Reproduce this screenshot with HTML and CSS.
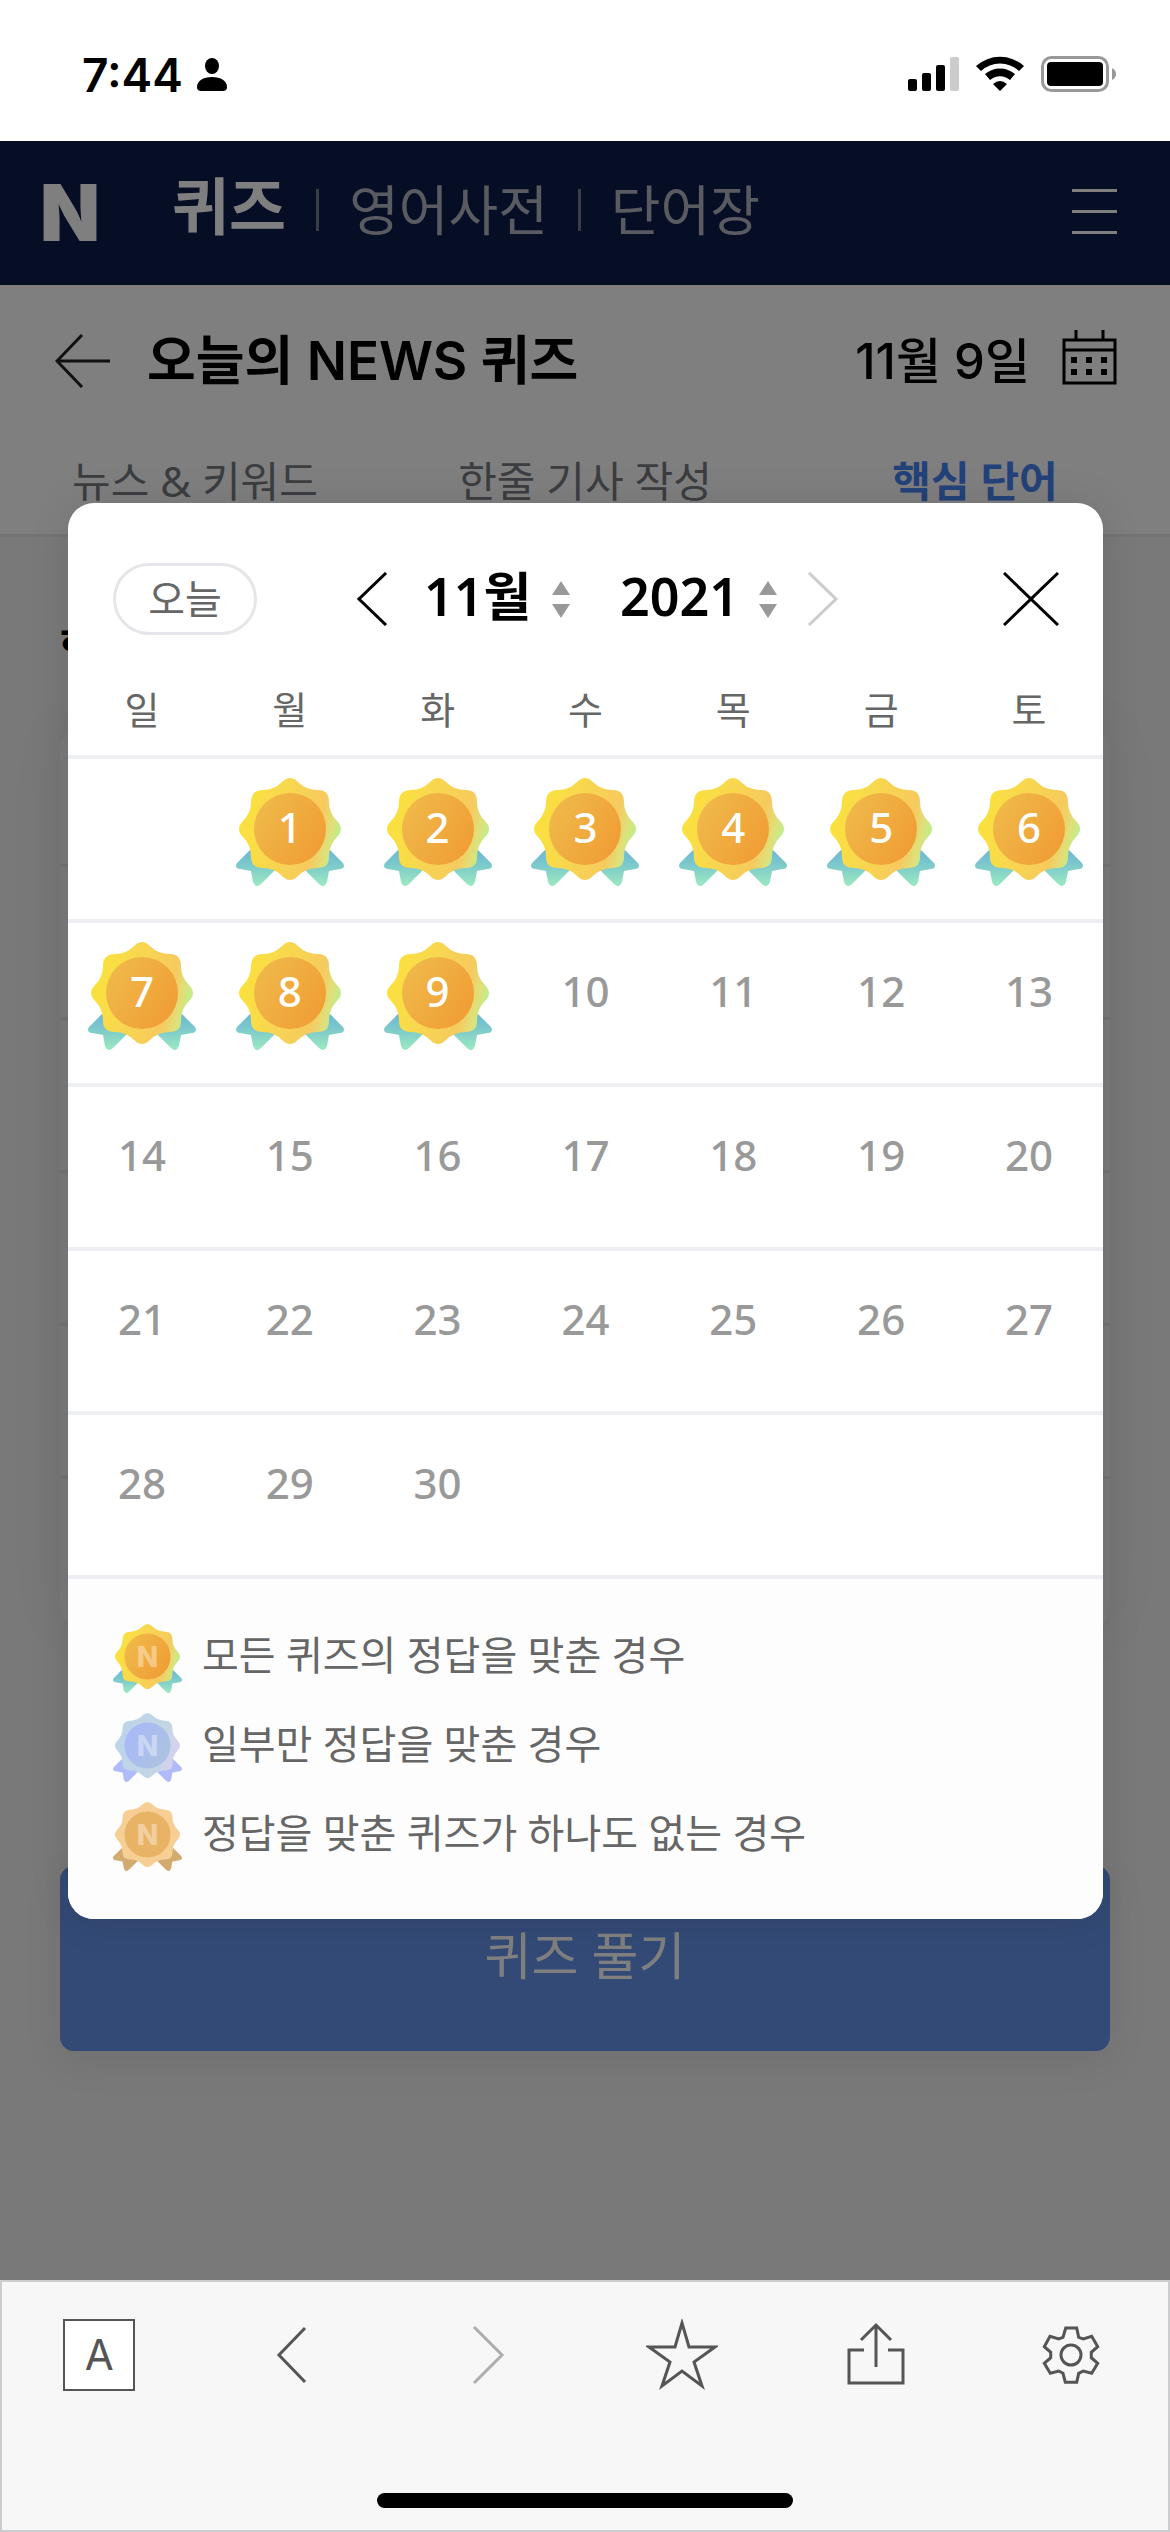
FILE: index.html
```html
<!DOCTYPE html>
<html lang="ko">

<head>
    <meta charset="UTF-8">
    <meta name="viewport" content="width=device-width, initial-scale=1.0">
    <title>오늘의 NEWS 퀴즈</title>
    <link rel="stylesheet" href="styles.css">
</head>

<body>
    <!-- shared shapes and gradients -->
    <svg class="defs" width="0" height="0" aria-hidden="true">
        <defs>
            <linearGradient id="goldEdge" x1="0" y1="0.3" x2="1" y2="0.55">
                <stop offset="0" stop-color="#fbe23a" />
                <stop offset="0.25" stop-color="#f9dc48" />
                <stop offset="0.78" stop-color="#f6ca5e" />
                <stop offset="0.9" stop-color="#dfe07a" />
                <stop offset="1" stop-color="#b9f08c" />
            </linearGradient>
            <linearGradient id="goldCoin" x1="0" y1="0.2" x2="1" y2="0.8">
                <stop offset="0" stop-color="#f0ba4a" />
                <stop offset="1" stop-color="#f09c34" />
            </linearGradient>
            <linearGradient id="goldTail" x1="0" y1="0" x2="0" y2="1">
                <stop offset="0" stop-color="#6cb8d4" />
                <stop offset="0.4" stop-color="#7cc8cc" />
                <stop offset="1" stop-color="#9ceac0" />
            </linearGradient>
            <linearGradient id="blueEdge" x1="0" y1="0.3" x2="1" y2="0.6">
                <stop offset="0" stop-color="#bcd4ea" />
                <stop offset="0.7" stop-color="#c2d6e4" />
                <stop offset="1" stop-color="#dcd0f4" />
            </linearGradient>
            <linearGradient id="blueCoin" x1="0" y1="0.2" x2="1" y2="0.8">
                <stop offset="0" stop-color="#a9b8fb" />
                <stop offset="1" stop-color="#abc4de" />
            </linearGradient>
            <path id="badgeEdge" d="M46 4Q54-4 62 4Q70 12 82 12Q93 12 93 24Q93 35 101 43Q109 51 101 59Q93 67 93 79Q93 90 82 90Q70 90 62 98Q54 106 46 98Q38 90 27 90Q15 90 15 79Q15 67 7 59Q-1 51 7 43Q15 35 15 24Q15 12 27 12Q38 12 46 4Z" />
            <path id="badgeTail" d="M14 72L1 85Q-2 90 4 91L15 93L17 104Q20 111 25 106L40 91ZM94 72L107 85Q110 90 104 91L93 93L91 104Q88 111 83 106L68 91Z" />
            <symbol id="gold" viewBox="0 0 108 108">
                <use href="#badgeTail" fill="url(#goldTail)" />
                <use href="#badgeEdge" fill="url(#goldEdge)" />
                <circle cx="54" cy="51" r="36" fill="url(#goldCoin)" />
            </symbol>
            <symbol id="blue" viewBox="0 0 108 108">
                <use href="#badgeTail" fill="#b0bbfa" />
                <use href="#badgeEdge" fill="url(#blueEdge)" />
                <circle cx="54" cy="51" r="36" fill="url(#blueCoin)" />
            </symbol>
            <symbol id="bronze" viewBox="0 0 108 108">
                <use href="#badgeTail" fill="#d2ab70" />
                <use href="#badgeEdge" fill="#f7cf94" />
                <circle cx="54" cy="51" r="36" fill="#e9b365" />
            </symbol>
            <symbol id="spin" viewBox="0 0 18 38">
                <path d="M9 1L18 15H0ZM9 38L18 24H0Z" fill="#999" />
            </symbol>
        </defs>
    </svg>

    <div class="status">
        <span class="clock">7:44</span>
        <svg class="person" width="30" height="34" viewBox="0 0 30 34">
            <ellipse cx="15" cy="8" rx="7" ry="8" />
            <path d="M0 29C0 23 6 19 15 19S30 23 30 29Q30 33 26 33H4Q0 33 0 29Z" />
        </svg>
        <svg class="signals" width="210" height="38" viewBox="0 0 210 38">
            <rect x="0" y="23" width="9" height="12" rx="2" />
            <rect x="14" y="17" width="9" height="18" rx="2" />
            <rect x="28" y="9" width="9" height="26" rx="2" />
            <rect x="42" y="1" width="9" height="34" rx="2" fill="#ccc" />
            <path d="M68 10A36 36 0 0 1 116 10L111 15A28 28 0 0 0 73 15ZM77 18A23 23 0 0 1 107 18L102 24A15 15 0 0 0 82 24ZM85 28Q92 22 99 28L92 35Z" />
            <rect x="134.500" y="1.500" width="65" height="33" rx="9" fill="none" stroke="#999" stroke-width="3" />
            <rect x="139" y="6" width="56" height="24" rx="4" />
            <path d="M204 12Q208 14 208 18T204 24Z" fill="#999" />
        </svg>
    </div>

    <div class="page">
        <nav class="nav">
            <a href="#" class="logo">N</a>
            <a href="#" class="menu on">퀴즈</a>
            <a href="#" class="menu">영어사전</a>
            <a href="#" class="menu">단어장</a>
            <button class="burger" aria-label="메뉴">
                <span></span>
                <span></span>
                <span></span>
            </button>
        </nav>

        <header class="top">
            <button aria-label="뒤로">
                <svg width="56" height="54" viewBox="0 0 56 54" fill="none" stroke="#222" stroke-width="3">
                    <path d="M27 1L2 27L27 53M2 27H55" />
                </svg>
            </button>
            <h1>오늘의 NEWS 퀴즈</h1>
            <span class="date">11월 9일</span>
            <button class="pick-date" aria-label="달력">
                <svg width="55" height="55" viewBox="0 0 55 55">
                    <path d="M2 10H53V53H2ZM2 20H53M14 0V10M41 0V10" fill="none" stroke="#000" stroke-width="3" />
                    <path d="M9 27h6v6h-6zM24 27h6v6h-6zM39 27h6v6h-6zM9 39h6v6h-6zM24 39h6v6h-6zM39 39h6v6h-6z" />
                </svg>
            </button>
        </header>

        <div class="tabs">
            <a href="#">뉴스 &amp; 키워드</a>
            <a href="#">한줄 기사 작성</a>
            <a href="#" class="on">핵심 단어</a>
        </div>

        <main class="content">
            <h2>핵심</h2>
            <ul class="words">
                <li></li>
                <li></li>
                <li></li>
                <li></li>
                <li></li>
                <li></li>
            </ul>
            <button class="solve">퀴즈 풀기</button>
        </main>

        <div class="dim">
            <div class="modal">
                <div class="cal-head">
                    <button class="today">오늘</button>
                    <button class="prev" aria-label="이전 달">
                        <svg width="32" height="54" viewBox="0 0 32 54" fill="none" stroke="#000" stroke-width="3">
                            <path d="M30 1L3 27L30 53" />
                        </svg>
                    </button>
                    <label class="pick">
                        <select aria-label="월">
                            <option>10월</option>
                            <option selected>11월</option>
                        </select>
                        <svg width="18" height="38"><use href="#spin" /></svg>
                    </label>
                    <label class="pick year">
                        <select aria-label="연도">
                            <option>2020</option>
                            <option selected>2021</option>
                        </select>
                        <svg width="18" height="38"><use href="#spin" /></svg>
                    </label>
                    <button class="next" aria-label="다음 달" disabled>
                        <svg width="32" height="54" viewBox="0 0 32 54" fill="none" stroke="#ccc" stroke-width="3">
                            <path d="M2 1L29 27L2 53" />
                        </svg>
                    </button>
                    <button class="close" aria-label="닫기">
                        <svg width="56" height="54" viewBox="0 0 56 54" fill="none" stroke="#000" stroke-width="3">
                            <path d="M1 1L55 53M55 1L1 53" />
                        </svg>
                    </button>
                </div>

                <table class="cal">
                    <thead>
                        <tr>
                            <th>일</th>
                            <th>월</th>
                            <th>화</th>
                            <th>수</th>
                            <th>목</th>
                            <th>금</th>
                            <th>토</th>
                        </tr>
                    </thead>
                    <tbody>
                        <tr>
                            <td></td>
                            <td><div class="day done"><svg><use href="#gold" /></svg><span>1</span></div></td>
                            <td><div class="day done"><svg><use href="#gold" /></svg><span>2</span></div></td>
                            <td><div class="day done"><svg><use href="#gold" /></svg><span>3</span></div></td>
                            <td><div class="day done"><svg><use href="#gold" /></svg><span>4</span></div></td>
                            <td><div class="day done"><svg><use href="#gold" /></svg><span>5</span></div></td>
                            <td><div class="day done"><svg><use href="#gold" /></svg><span>6</span></div></td>
                        </tr>
                        <tr>
                            <td><div class="day done"><svg><use href="#gold" /></svg><span>7</span></div></td>
                            <td><div class="day done"><svg><use href="#gold" /></svg><span>8</span></div></td>
                            <td><div class="day done"><svg><use href="#gold" /></svg><span>9</span></div></td>
                            <td><div class="day">10</div></td>
                            <td><div class="day">11</div></td>
                            <td><div class="day">12</div></td>
                            <td><div class="day">13</div></td>
                        </tr>
                        <tr>
                            <td><div class="day">14</div></td>
                            <td><div class="day">15</div></td>
                            <td><div class="day">16</div></td>
                            <td><div class="day">17</div></td>
                            <td><div class="day">18</div></td>
                            <td><div class="day">19</div></td>
                            <td><div class="day">20</div></td>
                        </tr>
                        <tr>
                            <td><div class="day">21</div></td>
                            <td><div class="day">22</div></td>
                            <td><div class="day">23</div></td>
                            <td><div class="day">24</div></td>
                            <td><div class="day">25</div></td>
                            <td><div class="day">26</div></td>
                            <td><div class="day">27</div></td>
                        </tr>
                        <tr>
                            <td><div class="day">28</div></td>
                            <td><div class="day">29</div></td>
                            <td><div class="day">30</div></td>
                            <td></td>
                            <td></td>
                            <td></td>
                            <td></td>
                        </tr>
                    </tbody>
                </table>

                <ul class="legend">
                    <li>
                        <svg viewBox="0 0 108 108"><use href="#gold" /><text x="54" y="67">N</text></svg>
                        모든 퀴즈의 정답을 맞춘 경우
                    </li>
                    <li>
                        <svg viewBox="0 0 108 108"><use href="#blue" /><text x="54" y="67">N</text></svg>
                        일부만 정답을 맞춘 경우
                    </li>
                    <li>
                        <svg viewBox="0 0 108 108"><use href="#bronze" /><text x="54" y="67">N</text></svg>
                        정답을 맞춘 퀴즈가 하나도 없는 경우
                    </li>
                </ul>
            </div>
        </div>
    </div>

    <footer class="toolbar">
        <div class="tools">
            <button class="letter"><span>A</span></button>
            <button aria-label="이전">
                <svg viewBox="0 0 72 72"><path d="M48 9L22 36L48 63" /></svg>
            </button>
            <button aria-label="다음" class="off">
                <svg viewBox="0 0 72 72"><path d="M22 8L50 36L22 64" /></svg>
            </button>
            <button aria-label="즐겨찾기">
                <svg viewBox="0 0 72 72"><path d="M36 4L43 28H69L48 43L56 67L36 52L16 67L24 43L3 28H29Z" /></svg>
            </button>
            <button aria-label="공유">
                <svg viewBox="0 0 72 72"><path d="M24 31H9V64H63V31H48M36 48V6M21 21L36 6L51 21" /></svg>
            </button>
            <button aria-label="설정">
                <svg viewBox="-8 -8 72 72">
                    <path d="M22.700 1H33.700L35.700 10.300L40.300 12L48.700 9.300L54.700 19.700L48.300 25.300V30.700L54.700 36.300L48.700 46.300L40.300 44L35.700 46.300L33.700 55.300H22.300L20 46.300L15.700 44L7.300 46.300L1.300 36.300L7.700 30.700V25.300L1.300 19.700L7 9.300L15.700 12L20 10.300Z" />
                    <circle cx="28" cy="28" r="10" />
                </svg>
            </button>
        </div>
        <div class="home"></div>
    </footer>
</body>

</html>
```

FILE: styles.css
```css
*,
::before,
::after {
    box-sizing: border-box;
    margin: 0;
    padding: 0;
}

body {
    display: flex;
    flex-direction: column;
    min-height: 100vh;
    font-family: "Noto Sans", "Noto Sans CJK KR", sans-serif;
    background: #fff;
    color: #000;
}

a {
    color: inherit;
    text-decoration: none;
}

ul {
    list-style: none;
}

button,
select {
    border: 0;
    background: none;
    font: inherit;
    color: inherit;
}

svg {
    display: block;
}

.defs {
    position: absolute;
}

/* status bar */
.status {
    display: flex;
    align-items: center;
    height: 141px;
    padding: 8px 52px 0 82px;
}

.clock {
    font-family: Inter, sans-serif;
    font-size: 46px;
    font-weight: 600;
}

.person {
    margin-left: 14px;
}

.signals {
    margin-left: auto;
}

.page {
    position: relative;
    flex: 1;
    background: #f2f2f2;
}

/* nav */
.nav {
    display: flex;
    align-items: center;
    height: 144px;
    padding: 0 53px 0 40px;
    background: #0c1c4c;
    color: #fff;
}

.logo {
    margin-right: 72px;
    font-family: Inter, sans-serif;
    font-size: 78px;
    font-weight: 900;
    line-height: 80px;
}

.menu {
    display: flex;
    align-items: center;
    font-size: 54px;
    line-height: 80px;
    padding-bottom: 6px;
    color: #b4b6c2;
}

.menu.on {
    font-size: 62px;
    font-weight: 700;
    padding-bottom: 14px;
    color: #fff;
}

.menu + .menu::before {
    content: "";
    width: 3px;
    height: 42px;
    margin: 0 30px;
    background: #74788c;
}

.burger {
    display: grid;
    gap: 18px;
    width: 45px;
    margin-left: auto;
    padding-bottom: 4px;
}

.burger span {
    height: 3px;
    background: #fff;
}

/* title row */
.top {
    display: flex;
    align-items: center;
    height: 152px;
    padding: 0 53px 0 55px;
    background: #fff;
}

.top h1 {
    margin-left: 36px;
    padding-bottom: 8px;
    font-family: Inter, "Noto Sans CJK KR", sans-serif;
    font-size: 53px;
    font-weight: 600;
}

.date {
    margin-left: auto;
    margin-right: 32px;
    padding-bottom: 8px;
    font-family: Inter, "Noto Sans CJK KR", sans-serif;
    font-size: 49px;
    font-weight: 500;
}

.pick-date {
    padding-bottom: 8px;
}

.tabs {
    display: grid;
    grid-template-columns: repeat(3, 1fr);
    height: 100px;
    border-bottom: 3px solid #e6e6e6;
    background: #fff;
    font-size: 42px;
    line-height: 88px;
    text-align: center;
    color: #777a80;
}

.tabs .on {
    font-weight: 700;
    color: #4884f4;
}

.content {
    padding: 68px 60px;
}

.content h2 {
    height: 118px;
    font-size: 44px;
    line-height: 84px;
}

.words {
    border-radius: 28px;
    background: #f2f4f6;
    box-shadow: 0 0 60px rgba(0, 0, 0, 0.05);
}

.words li {
    height: 153px;
    border-bottom: 3px solid #e4e6e8;
}

.words li:first-child {
    height: 144px;
}

.words li:last-child {
    border: 0;
}

.solve {
    display: block;
    width: 100%;
    height: 185px;
    margin-top: 234px;
    padding-bottom: 12px;
    border-radius: 14px;
    background: #6694ec;
    box-shadow: 0 10px 40px rgba(0, 0, 0, 0.08);
    font-size: 51px;
    color: #fff;
}

/* calendar layer */
.dim {
    position: absolute;
    inset: 0;
    display: flex;
    align-items: center;
    padding: 0 67px 0 68px;
    background: rgba(0, 0, 0, 0.5);
}

.modal {
    flex: 1;
    overflow: hidden;
    border-radius: 26px;
    background: #fff;
    box-shadow: 0 0 40px rgba(0, 0, 0, 0.1);
}

.cal-head {
    display: flex;
    align-items: center;
    padding: 60px 44px 0 45px;
}

.today {
    width: 144px;
    height: 72px;
    border: 3px solid #e4e6e9;
    border-radius: 36px;
    font-size: 40px;
    line-height: 60px;
    color: #666;
}

.prev {
    margin-left: 99px;
}

.pick {
    display: flex;
    align-items: center;
    gap: 20px;
    margin-left: 36px;
}

.pick.year {
    margin-left: 50px;
}

.pick select {
    appearance: none;
    height: 72px;
    padding-bottom: 6px;
    font-size: 52px;
    font-weight: 600;
    line-height: 66px;
}

.next {
    margin-left: 30px;
}

.close {
    margin-left: auto;
}

.cal {
    width: 100%;
    table-layout: fixed;
    border-collapse: collapse;
}

.cal th {
    padding: 52px 0 24px;
    border-bottom: 4px solid #edeff2;
    font-size: 38px;
    font-weight: 400;
    line-height: 44px;
    color: #666;
}

.cal td {
    height: 164px;
    padding: 19px 0 33px;
    border-bottom: 4px solid #edeff2;
}

.day {
    display: grid;
    justify-content: center;
    height: 108px;
    font-size: 42px;
    font-weight: 500;
    line-height: 98px;
    text-align: center;
    color: #999;
}

.done {
    grid-template-columns: 108px;
    color: #fff;
}

.done svg,
.done span {
    grid-area: 1 / 1;
    width: 108px;
    height: 108px;
}

.legend {
    display: grid;
    gap: 20px;
    padding: 45px 45px 48px;
    background: #fdfdfd;
}

.legend li {
    display: flex;
    align-items: center;
    gap: 20px;
    height: 69px;
    font-size: 40px;
    line-height: 60px;
    padding-bottom: 6px;
    color: #666;
}

.legend svg {
    width: 69px;
    height: 69px;
    margin-bottom: -6px;
}

.legend text {
    font-family: Inter, sans-serif;
    font-size: 44px;
    font-weight: 800;
    text-anchor: middle;
    fill: rgba(255, 255, 255, 0.4);
}

/* browser toolbar */
.toolbar {
    height: 252px;
    padding-top: 37px;
    border: 2px solid #cbcdce;
    background: #f7f7f7;
}

.tools {
    display: grid;
    grid-template-columns: repeat(6, 1fr);
    justify-items: center;
}

.tools svg {
    width: 72px;
    height: 72px;
    fill: none;
    stroke: #555;
    stroke-width: 3px;
}

.off {
    opacity: 0.45;
}

.letter span {
    display: block;
    width: 72px;
    height: 72px;
    border: 2px solid #555;
    background: #fff;
    font-family: Inter, sans-serif;
    font-size: 42px;
    line-height: 68px;
    color: #555;
}

.home {
    width: 416px;
    height: 15px;
    margin: 102px auto 0;
    border-radius: 8px;
    background: #000;
}
```
